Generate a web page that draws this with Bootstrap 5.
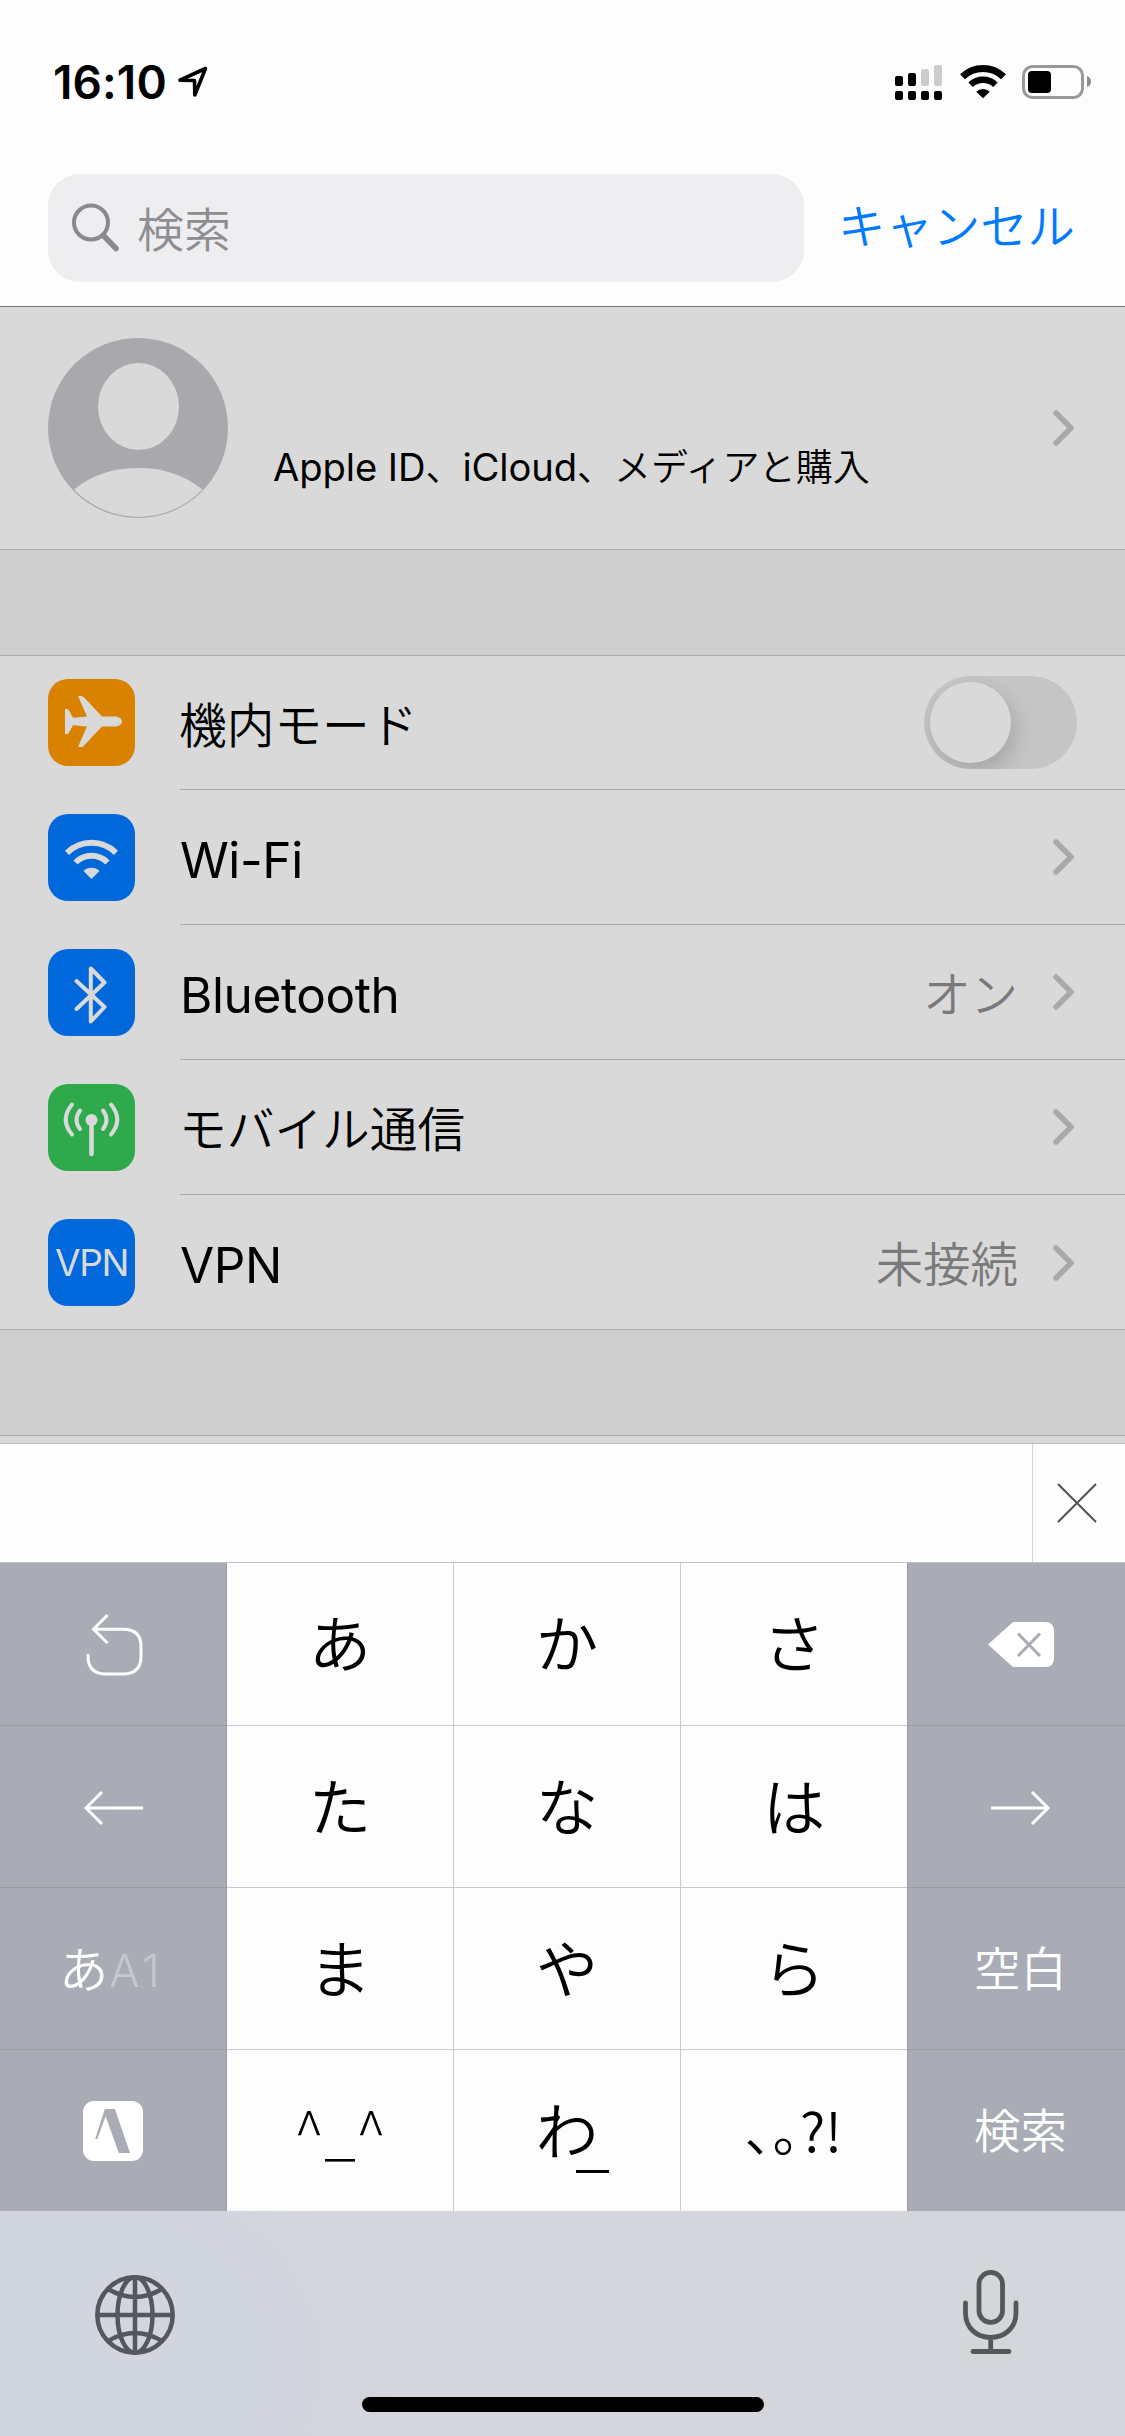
<!DOCTYPE html>
<html lang="ja">
<head>
<meta charset="utf-8">
<meta name="viewport" content="width=device-width, initial-scale=1">
<title>設定</title>
<link href="https://cdn.jsdelivr.net/npm/bootstrap@5.3.0/dist/css/bootstrap.min.css" rel="stylesheet">
<style>
body{width:1125px;height:2436px;margin:0;overflow:hidden;background:#fdfdfe;color:#000;font-family:Inter,"Noto Sans CJK JP",sans-serif;line-height:1}
svg{display:block;flex:none;overflow:visible}
.jp{font-family:"Noto Sans CJK JP",sans-serif;font-weight:350}
.statusbar{height:174px;padding:64px 33px 0 53px}
.clock{font-size:46px;font-weight:600;line-height:36px;letter-spacing:.1px;width:125px;white-space:nowrap}
.arrow{margin-top:2px}
.searchrow{height:132px;padding:0 48px}
.searchbox{width:756px;height:108px;border-radius:32px;background:#eeeef0;padding-left:24px;color:#8e8e92;font-size:47px}
.searchbox svg{margin-top:-2px}
.searchbox span{margin-left:17px;padding-bottom:3px}
.cancel{width:273px;font-size:47.400px;color:#007aff;height:108px;padding:0 0 9px 34px;white-space:nowrap}
.profile{height:244px;background:#d9d9d9;border-top:1px solid #777;border-bottom:1px solid #a9a9ab;padding:0 51px 0 48px}
.profile p{margin:78px 0 0 45px;font-size:38.200px;letter-spacing:-.1px;white-space:nowrap}
.profile p .jp{font-size:37px;letter-spacing:0}
.gap-band{height:105px;background:#cececf}
.settings{background:#d9d9d9;border-top:1px solid #a9a9ab;border-bottom:1px solid #a9a9ab;border-radius:0;height:675px}
.srow{height:135px;padding-left:48px}
.srow:first-child{height:134px}
.srow:first-child .tile{margin-top:-1px}
.srow:last-child{height:134px;padding-top:1px}
.tile{width:87px;height:87px;border-radius:20px;flex:none;color:#d9d9d9}
.orange{background:#d98200}.blue{background:#0068db}.green{background:#2eaa4c}
.vpn{font-size:37px;letter-spacing:-1.3px;padding-bottom:1px}
.sbody{margin-left:45px;height:100%;border-bottom:1px solid #a9a9ab;padding-right:51px}
.srow:last-child .sbody{border:0}
.label{font-size:49.500px;padding:7px 0 0;letter-spacing:-.4px}
.label.jp{font-size:47.700px;padding:0;margin-left:-1px;letter-spacing:0}
.value{font-size:47.400px;color:#7a7a7c;padding-bottom:1px;margin-right:35px}
.toggle{width:153px;height:93px;border-radius:47px;background:#c5c5c5;padding:6px;margin-right:-3px;overflow:hidden}
.knob{width:81px;height:81px;border-radius:50%;background:#d9d9d9;box-shadow:4px 9px 20px rgba(0,0,0,.16)}
.peek{height:9px;background:#d9d9d9;border-top:1px solid #a9a9ab;border-bottom:1px solid #bcbcc4}
.suggest{height:119px;background:#fdfdfd;border-bottom:1px solid #bcc1cb}
.close-key{width:93px;border-left:1px solid #d2d3da;height:118px;padding-right:5px}
.keys{display:grid;grid-template-columns:227px 227px 227px 226px 218px;grid-template-rows:163px 162px 162px 161px;background:#fdfdfd}
.key{border-right:1px solid #c9cbd2;border-bottom:1px solid #c9cbd2;font-size:62.500px;font-family:"Noto Sans CJK JP",sans-serif;position:relative;white-space:nowrap}
.key.jp{padding-bottom:5px}
.key:nth-child(5n+4){border-right:0}
.key.fn{background:#a9acb4;border-color:#9a9da4;color:#fff;font-size:46.500px;font-weight:350}
.key:nth-child(5n){border-right:0;border-left:1px solid #9a9da4;padding-left:8px}
.key:nth-child(n+16){border-bottom:0}
.key.fn.word{padding-bottom:5px}
.mode{padding:0 3px 5px 0}
.mode .kana{font-size:49px}
.alt{font-family:Inter,sans-serif;font-weight:300;font-size:45px;color:#c5c9cd;margin-left:1px;letter-spacing:4px;padding-top:8px}
.sym{font-size:54px;font-weight:350;padding-bottom:3px}
.sym.face{font-size:57px;font-weight:300;padding-bottom:2px}
.wa-bar{position:absolute;left:122px;top:120px;width:33px;height:3px;background:#000}
.undo{margin-left:3px}
.dock{height:225px;background:radial-gradient(ellipse 330px 260px at 80px 150px,#d1d5de 0 60%,#d5d6db 100%);padding:59px 106px 0 95px;position:relative}
.globe{margin-top:5px}
.homebar{position:absolute;left:362px;top:186px;width:402px;height:15px;border-radius:8px;background:#000}
</style>
</head>
<body>
<header>
  <div class="statusbar d-flex align-items-start">
    <div class="clock">16:10</div>
    <svg class="arrow" width="30" height="31" viewBox="0 0 30 31" fill="none" stroke="#000" stroke-width="3.600" stroke-linejoin="round"><path d="M27.500 2.500 2 14.200l14.500.3.3 14.500z"/></svg>
    <div class="ms-auto d-flex">
      <svg width="47" height="36" viewBox="0 0 47 36"><g fill="#ccc"><rect x="26" y="5" width="8" height="17" rx="2"/><rect x="39" y="1" width="8" height="21" rx="2"/></g><rect y="12" width="8" height="10" rx="2"/><rect x="13" y="9" width="8" height="13" rx="2"/><rect y="27" width="8" height="9" rx="2"/><rect x="13" y="27" width="8" height="9" rx="2"/><rect x="26" y="27" width="8" height="9" rx="2"/><rect x="39" y="27" width="8" height="9" rx="2"/></svg>
      <svg class="ms-3" width="50" height="36" viewBox="-2 0 50 36" fill="none" stroke="#000"><path d="M2.500 12.800a29.500 29.500 0 0 1 41 0" stroke-width="7"/><path d="M10.600 20.700a18 18 0 0 1 24.800 0" stroke-width="6.400"/><path d="M16.200 27.700a10 10 0 0 1 13.600 0L23 34.300z" fill="#000" stroke="none"/></svg>
      <svg style="margin-left:14px" width="70" height="36" viewBox="0 0 70 36"><rect x="1.500" y="2.500" width="59" height="31" rx="9" fill="none" stroke="#999" stroke-width="3"/><rect x="6" y="7" width="23" height="22" rx="4"/><path d="M65 12q4 1.500 4 5.500t-4 5.500z" fill="#8b8b8b"/></svg>
    </div>
  </div>
  <div class="searchrow d-flex">
    <div class="searchbox d-flex align-items-center">
      <svg width="48" height="49" viewBox="0 0 48 49" fill="none" stroke="#8a8a8e"><circle cx="19" cy="19.500" r="17" stroke-width="4"/><path d="M31.500 32.500 44 45.500" stroke-width="5.500" stroke-linecap="round"/></svg>
      <span class="jp">検索</span>
    </div>
    <div class="cancel jp d-flex align-items-center">キャンセル</div>
  </div>
</header>
<main>
  <section class="profile d-flex align-items-center">
    <svg width="180" height="180" viewBox="0 0 180 180"><circle cx="90" cy="90" r="90" fill="#a9a8ad"/><ellipse cx="90.500" cy="68.500" rx="40.500" ry="43.500" fill="#d9d9d9"/><path d="M26 151.500Q52 130 90 130t64.500 21.500A89 89 0 0 1 26 151.500z" fill="#d9d9d9"/></svg>
    <p>Apple ID<span class="jp">、</span>iCloud<span class="jp">、メディアと購入</span></p>
    <svg class="ms-auto" width="21" height="36" viewBox="0 0 21 36" fill="none" stroke="#a9a9ac" stroke-width="5.500" stroke-linecap="round" stroke-linejoin="round"><path d="M3 3l15 15L3 33"/></svg>
  </section>
  <div class="gap-band"></div>
  <section class="settings list-group">
    <div class="srow d-flex align-items-center">
      <div class="tile orange d-flex align-items-center justify-content-center"><svg width="87" height="87" viewBox="0 0 87 87" fill="currentColor"><path d="M30 17h3.500q1.500 0 2.600 1.500L54 37.500h13c4 0 7 2.500 7 5s-3 5-7 5H54L36 66.500q-1 1.500-2.500 1.500H30l9-20.500-14-1.200-4 7.200q-.7 1.500-2 1.500H17V30h2q1.300 0 2 1.500l4 7.200 14-1.200z"/></svg></div>
      <div class="sbody d-flex align-items-center flex-fill"><span class="label jp">機内モード</span><div class="toggle ms-auto"><div class="knob"></div></div></div>
    </div>
    <div class="srow d-flex align-items-center">
      <div class="tile blue"><svg width="87" height="87" viewBox="0 0 87 87" fill="none" stroke="currentColor"><path d="M19 38.800a35 35 0 0 1 49 0" stroke-width="6"/><path d="M27.500 48.500a22.500 22.500 0 0 1 32 0" stroke-width="6"/><path d="M35.500 57a11.500 11.500 0 0 1 16 0L43.500 65z" fill="currentColor" stroke="none"/></svg></div>
      <div class="sbody d-flex align-items-center flex-fill"><span class="label">Wi-Fi</span><svg class="ms-auto" width="21" height="36" viewBox="0 0 21 36" fill="none" stroke="#a9a9ac" stroke-width="5.500" stroke-linecap="round" stroke-linejoin="round"><path d="M3 3l15 15L3 33"/></svg></div>
    </div>
    <div class="srow d-flex align-items-center">
      <div class="tile blue"><svg width="87" height="87" viewBox="0 0 87 87" fill="none" stroke="currentColor" stroke-width="4" stroke-linecap="round" stroke-linejoin="round"><path d="M28.500 32 56.500 58 42.800 72.500v-53L56.500 33.500 28.500 60"/></svg></div>
      <div class="sbody d-flex align-items-center flex-fill"><span class="label">Bluetooth</span><span class="value jp ms-auto">オン</span><svg width="21" height="36" viewBox="0 0 21 36" fill="none" stroke="#a9a9ac" stroke-width="5.500" stroke-linecap="round" stroke-linejoin="round"><path d="M3 3l15 15L3 33"/></svg></div>
    </div>
    <div class="srow d-flex align-items-center">
      <div class="tile green"><svg width="87" height="87" viewBox="0 0 87 87" fill="none" stroke="currentColor" stroke-width="4" stroke-linecap="round"><circle cx="43.500" cy="36" r="6" fill="currentColor" stroke="none"/><path d="M43.500 37v33" stroke-width="4.600"/><path d="M32 26.500q-7 9.500 0 18.500M24 20.500q-12.500 15 0 30M55 26.500q7 9.500 0 18.500M63 20.500q12.500 15 0 30"/></svg></div>
      <div class="sbody d-flex align-items-center flex-fill"><span class="label jp">モバイル通信</span><svg class="ms-auto" width="21" height="36" viewBox="0 0 21 36" fill="none" stroke="#a9a9ac" stroke-width="5.500" stroke-linecap="round" stroke-linejoin="round"><path d="M3 3l15 15L3 33"/></svg></div>
    </div>
    <div class="srow d-flex align-items-center">
      <div class="tile blue vpn d-flex align-items-center justify-content-center">VPN</div>
      <div class="sbody d-flex align-items-center flex-fill"><span class="label">VPN</span><span class="value jp ms-auto">未接続</span><svg width="21" height="36" viewBox="0 0 21 36" fill="none" stroke="#a9a9ac" stroke-width="5.500" stroke-linecap="round" stroke-linejoin="round"><path d="M3 3l15 15L3 33"/></svg></div>
    </div>
  </section>
  <div class="gap-band"></div>
  <div class="peek"></div>
</main>
<footer>
  <div class="suggest d-flex justify-content-end">
    <div class="close-key d-flex align-items-center justify-content-center"><svg width="38" height="38" viewBox="0 0 38 38" stroke="#505356" stroke-width="2"><path d="M0 0l38 38M38 0 0 38"/></svg></div>
  </div>
  <div class="keys">
    <div class="key fn d-flex align-items-center justify-content-center"><svg class="undo" width="56" height="62" viewBox="0 0 56 62" fill="none" stroke="#fff" stroke-width="3"><path d="M20.500 2 6.500 16.200 20.500 30M6.500 16.200H36q18 0 18 17V43q0 18-18 18H19Q1 61 1 43v-2"/></svg></div>
    <div class="key jp d-flex align-items-center justify-content-center">あ</div>
    <div class="key jp d-flex align-items-center justify-content-center">か</div>
    <div class="key jp d-flex align-items-center justify-content-center">さ</div>
    <div class="key fn d-flex align-items-center justify-content-center"><svg width="66" height="45" viewBox="0 0 66 45"><path d="M25 0h32q9 0 9 9v27q0 9-9 9H25L0 22.500z" fill="#fff"/><path d="M30 11.500 52 34M52 11.500 30 34" stroke="#a9acb4" stroke-width="3"/></svg></div>

    <div class="key fn d-flex align-items-center justify-content-center"><svg width="59" height="34" viewBox="0 0 59 34" fill="none" stroke="#fff" stroke-width="3"><path d="M59 18H2M18 2 2 18l16 16"/></svg></div>
    <div class="key jp d-flex align-items-center justify-content-center">た</div>
    <div class="key jp d-flex align-items-center justify-content-center">な</div>
    <div class="key jp d-flex align-items-center justify-content-center">は</div>
    <div class="key fn d-flex align-items-center justify-content-center"><svg width="59" height="34" viewBox="0 0 59 34" fill="none" stroke="#fff" stroke-width="3"><path d="M0 18h57M41 2l16 16-16 16"/></svg></div>

    <div class="key fn mode d-flex align-items-center justify-content-center"><span class="kana">あ</span><span class="alt">A1</span></div>
    <div class="key jp d-flex align-items-center justify-content-center">ま</div>
    <div class="key jp d-flex align-items-center justify-content-center">や</div>
    <div class="key jp d-flex align-items-center justify-content-center">ら</div>
    <div class="key fn word d-flex align-items-center justify-content-center">空白</div>

    <div class="key fn d-flex align-items-center justify-content-center"><svg width="60" height="60" viewBox="0 0 60 60"><rect width="60" height="60" rx="11" fill="#fff"/><path d="M21.800 8h10.100L47 52H35.800L22.600 15.200 14.300 38h-2.100z" fill="#a9acb4"/></svg></div>
    <div class="key sym face d-flex align-items-center justify-content-center">^_^</div>
    <div class="key jp d-flex align-items-center justify-content-center">わ<span class="wa-bar"></span></div>
    <div class="key sym d-flex align-items-center justify-content-center">､｡?!</div>
    <div class="key fn word d-flex align-items-center justify-content-center">検索</div>
  </div>
  <div class="dock d-flex justify-content-between">
    <svg class="globe" width="80" height="80" viewBox="0 0 80 80" fill="none" stroke="#54585e" stroke-width="4.500"><circle cx="40" cy="40" r="37.700"/><ellipse cx="40" cy="40" rx="17.500" ry="37.700"/><path d="M40 2v76M2 40h76M13 14q27 16 54 0M13 66q27-16 54 0"/></svg>
    <svg width="56" height="84" viewBox="0 0 56 84" fill="none" stroke="#54585b" stroke-width="4.800" stroke-linecap="round"><rect x="16" y="2.400" width="23.500" height="50" rx="11.700"/><path d="M2.500 33v10C2.500 58 14 67.500 27.700 67.500S53 58 53 43V33M27.700 67.500V81M10 81.500h36"/></svg>
    <div class="homebar"></div>
  </div>
</footer>
<script src="https://cdn.jsdelivr.net/npm/bootstrap@5.3.0/dist/js/bootstrap.bundle.min.js"></script>
</body>
</html>
